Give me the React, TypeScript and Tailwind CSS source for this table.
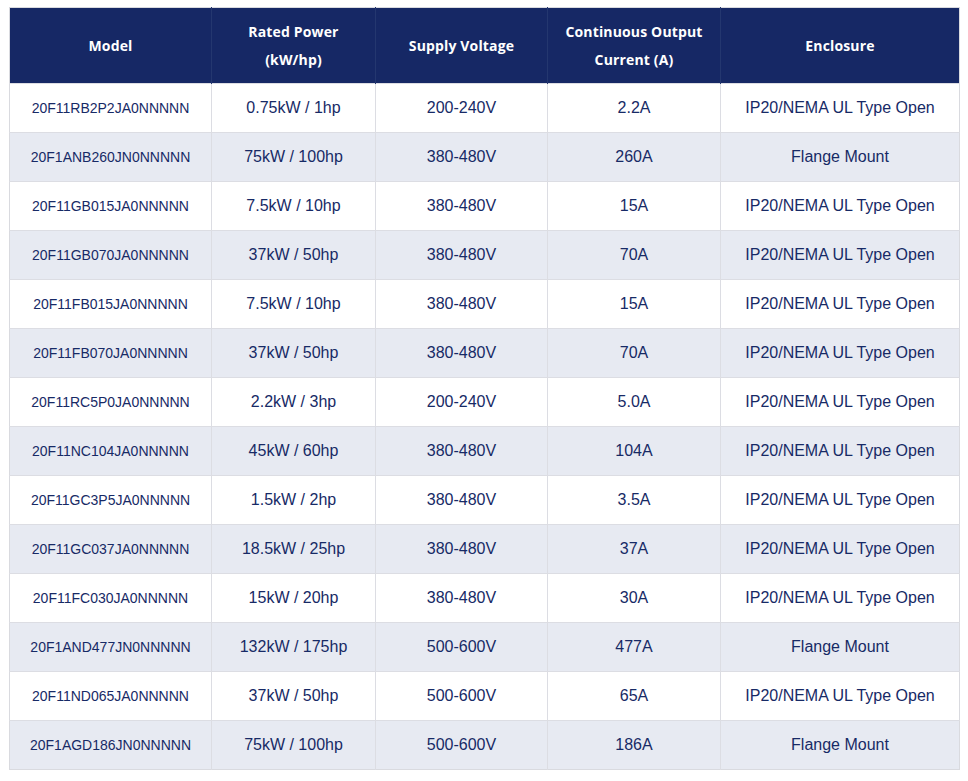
import React from 'react';

interface Drive {
  model: string;
  power: string;
  voltage: string;
  current: string;
  enclosure: string;
}

const drives: Drive[] = [
  { model: '20F11RB2P2JA0NNNNN', power: '0.75kW / 1hp', voltage: '200-240V', current: '2.2A', enclosure: 'IP20/NEMA UL Type Open' },
  { model: '20F1ANB260JN0NNNNN', power: '75kW / 100hp', voltage: '380-480V', current: '260A', enclosure: 'Flange Mount' },
  { model: '20F11GB015JA0NNNNN', power: '7.5kW / 10hp', voltage: '380-480V', current: '15A', enclosure: 'IP20/NEMA UL Type Open' },
  { model: '20F11GB070JA0NNNNN', power: '37kW / 50hp', voltage: '380-480V', current: '70A', enclosure: 'IP20/NEMA UL Type Open' },
  { model: '20F11FB015JA0NNNNN', power: '7.5kW / 10hp', voltage: '380-480V', current: '15A', enclosure: 'IP20/NEMA UL Type Open' },
  { model: '20F11FB070JA0NNNNN', power: '37kW / 50hp', voltage: '380-480V', current: '70A', enclosure: 'IP20/NEMA UL Type Open' },
  { model: '20F11RC5P0JA0NNNNN', power: '2.2kW / 3hp', voltage: '200-240V', current: '5.0A', enclosure: 'IP20/NEMA UL Type Open' },
  { model: '20F11NC104JA0NNNNN', power: '45kW / 60hp', voltage: '380-480V', current: '104A', enclosure: 'IP20/NEMA UL Type Open' },
  { model: '20F11GC3P5JA0NNNNN', power: '1.5kW / 2hp', voltage: '380-480V', current: '3.5A', enclosure: 'IP20/NEMA UL Type Open' },
  { model: '20F11GC037JA0NNNNN', power: '18.5kW / 25hp', voltage: '380-480V', current: '37A', enclosure: 'IP20/NEMA UL Type Open' },
  { model: '20F11FC030JA0NNNNN', power: '15kW / 20hp', voltage: '380-480V', current: '30A', enclosure: 'IP20/NEMA UL Type Open' },
  { model: '20F1AND477JN0NNNNN', power: '132kW / 175hp', voltage: '500-600V', current: '477A', enclosure: 'Flange Mount' },
  { model: '20F11ND065JA0NNNNN', power: '37kW / 50hp', voltage: '500-600V', current: '65A', enclosure: 'IP20/NEMA UL Type Open' },
  { model: '20F1AGD186JN0NNNNN', power: '75kW / 100hp', voltage: '500-600V', current: '186A', enclosure: 'Flange Mount' },
];

const App: React.FC = () => {
  return (
    <div className="min-h-screen bg-white pl-[9px] pt-[7px]">
      <table className="w-[950px] table-fixed border-collapse border border-[#d9dadf] text-[#172a66]">
        <colgroup>
          <col className="w-[202px]" />
          <col className="w-[164px]" />
          <col className="w-[172px]" />
          <col className="w-[173px]" />
          <col className="w-[239px]" />
        </colgroup>
        <thead>
          <tr className="h-[76px] bg-[#162865] text-white font-['Open_Sans',sans-serif] text-[14px] font-bold leading-[28px] tracking-[0.15px]">
            <th className="border-r border-[#24376f] px-2">Model</th>
            <th className="border-r border-[#24376f] px-2">
              Rated Power
              <br />
              (kW/hp)
            </th>
            <th className="border-r border-[#24376f] px-2">Supply Voltage</th>
            <th className="border-r border-[#24376f] px-2">
              Continuous Output
              <br />
              Current (A)
            </th>
            <th className="px-2">Enclosure</th>
          </tr>
        </thead>
        <tbody className="font-['Liberation_Sans',Arial,sans-serif]">
          {drives.map((d, i) => (
            <tr
              key={d.model}
              className={`h-[49px] border-t border-[#dcdde3] text-center ${i % 2 === 1 ? 'bg-[#e7eaf2]' : 'bg-white'}`}
            >
              <td className="border-r border-[#dcdde3] text-[14px]">{d.model}</td>
              <td className="border-r border-[#dcdde3] text-[16px]">{d.power}</td>
              <td className="border-r border-[#dcdde3] text-[16px]">{d.voltage}</td>
              <td className="border-r border-[#dcdde3] text-[16px]">{d.current}</td>
              <td className="text-[16px]">{d.enclosure}</td>
            </tr>
          ))}
        </tbody>
      </table>
    </div>
  );
};

export default App;
